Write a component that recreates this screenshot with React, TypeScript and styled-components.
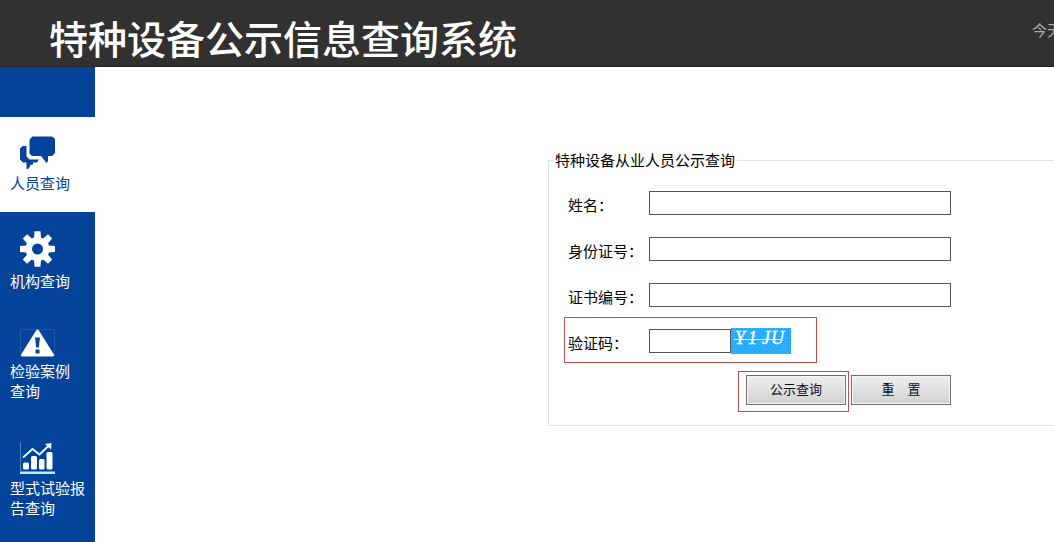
import React from "react";
import styled, { createGlobalStyle } from "styled-components";

const BLUE = "#03439a";
const RED = "#c0504f";

const GlobalStyle = createGlobalStyle`
  * { box-sizing: border-box; }
  html, body, #root { min-height: 100vh; }
  body {
    margin: 0;
    background: #fff;
    color: #000;
    font: 15px/20px "Noto Sans CJK SC", "Liberation Sans", sans-serif;
    overflow-x: hidden;
  }
`;

const Page = styled.div`
  display: flex;
  flex-direction: column;
  min-height: 100vh;
  overflow: hidden;
`;

const Header = styled.header`
  display: flex;
  justify-content: space-between;
  height: 67px;
  padding-left: 49px;
  background: #313131;
  border-bottom: 1px solid #272727;
  overflow: hidden;
`;

const Title = styled.h1`
  margin: 0;
  padding-top: 10px;
  font-size: 39px;
  font-weight: 500;
  line-height: 54px;
  white-space: nowrap;
  color: #fff;
`;

const Today = styled.div`
  width: 22px;
  padding-top: 20px;
  white-space: nowrap;
  color: #aaa;
`;

const Body = styled.div`
  display: flex;
  flex: 1;
`;

const Sidebar = styled.nav`
  flex: 0 0 95px;
  padding-top: 50px;
  background: ${BLUE};
`;

const NavItem = styled.a<{ $active?: boolean }>`
  display: flex;
  flex-direction: column;
  gap: 4px;
  padding: 19px 10px;
  text-decoration: none;
  background: ${(p) => (p.$active ? "#fff" : BLUE)};
  color: ${(p) => (p.$active ? BLUE : "#fff")};

  svg {
    display: block;
    margin-left: 10px;
  }
`;

const NavText = styled.span`
  white-space: pre-line;
`;

const Main = styled.main`
  flex: 1;
  min-width: 0;
  padding: 82px 0 0 453px;
`;

const Panel = styled.fieldset`
  min-width: 560px;
  margin: 0;
  padding: 20px 4px;
  border: 1px solid #e2e2e2;
`;

const Legend = styled.legend`
  padding: 0 2px;
  line-height: 22px;
`;

const Form = styled.form`
  display: flex;
  flex-direction: column;
  gap: 16px;
  width: 398px;
  padding-left: 15px;
`;

const Row = styled.div`
  position: relative;
  display: flex;
  align-items: flex-start;
  height: 30px;
`;

const Label = styled.label`
  flex: 0 0 81px;
  line-height: 28px;
`;

const Field = styled.div`
  display: flex;
  flex: 1;
  align-items: center;
  height: 24px;
`;

const Input = styled.input<{ $short?: boolean }>`
  width: ${(p) => (p.$short ? "82px" : "100%")};
  height: 24px;
  padding: 0 4px;
  border: 1px solid #555;
  border-radius: 0;
  background: #fff;
  font: inherit;
  outline: none;
`;

const Actions = styled.div`
  display: flex;
  justify-content: flex-end;
  gap: 5px;
`;

const ButtonSlot = styled.div`
  position: relative;
`;

const Button = styled.button`
  display: block;
  width: 100px;
  height: 30px;
  padding: 0 0 2px;
  border: 1px solid #707070;
  border-radius: 0;
  background: linear-gradient(#eeeeee, #d2d2d2);
  box-shadow: inset 0 0 0 1px #f6f6f6;
  font: 13px/20px "Noto Sans CJK SC", sans-serif;
  color: #111;
`;

const RowMark = styled.span`
  position: absolute;
  inset: -12px 134px -4px -4px;
  border: 1px solid ${RED};
  pointer-events: none;
`;

const ButtonMark = styled.span`
  position: absolute;
  inset: -4px -3px -7px -8px;
  border: 1px solid ${RED};
  pointer-events: none;
`;

const ChatIcon = () => (
  <svg width="35" height="33" viewBox="0 0 35 33" fill={BLUE} aria-hidden="true">
    <path d="M12.500 0.500H32L35 3V17L32 20H28V25L26.500 27L21 20H12L9.500 17.500V3.500Z" />
    <path d="M2.500 10H6.500V20.500L9.500 23.500H19L17 26.500H13V28.500L10 29V30.500L8 33H6.500V26.500H3L0 23.500V12.500Z" />
  </svg>
);

const GearIcon = () => (
  <svg width="35" height="36" viewBox="-17.500 -18 35 36" fill="#fff" aria-hidden="true">
    {[0, 45, 90, 135].map((a) => (
      <path key={a} d="M-3 -17.800H3L3.500 -10V10L3 17.800H-3L-3.500 10V-10Z" transform={`rotate(${a})`} />
    ))}
    <circle r="12" />
    <circle r="5.500" fill={BLUE} />
  </svg>
);

const WarningIcon = () => (
  <svg width="35" height="28" viewBox="0 0 35 28" fill="#fff" aria-hidden="true">
    <path d="M0.500 27.500V0.500H34.500V27.500" fill="none" stroke="#1d59a8" />
    <path d="M17.500 2L32.500 26H2.500Z" stroke="#fff" strokeWidth="3" strokeLinejoin="round" />
    <path d="M15 8.500H20L18.800 18.500H16.200Z" fill={BLUE} />
    <rect x="15.500" y="20.500" width="4" height="4" fill={BLUE} />
  </svg>
);

const ChartIcon = () => (
  <svg width="35" height="35" viewBox="0 0 35 35" fill="#fff" aria-hidden="true">
    <path d="M0.500 3V32" stroke="#4a86c4" />
    <rect x="3" y="23.500" width="6" height="7" rx="1.500" />
    <rect x="11" y="17" width="6" height="13.500" rx="1.500" />
    <rect x="19" y="20" width="5.500" height="10.500" rx="1.500" />
    <rect x="26.500" y="13" width="6" height="17.500" rx="1.500" />
    <path d="M3 18.500L12.500 10L19.500 15.500L29.500 6" fill="none" stroke="#e8fbff" strokeWidth="1.800" />
    <path d="M25 5L31.500 4L31 10.500Z" />
    <rect y="32.500" width="35" height="2.500" fill="#b5f0f8" />
  </svg>
);

const Captcha = () => (
  <svg width="60" height="26" viewBox="0 0 60 26" role="img" aria-label="验证码图片">
    <defs>
      <pattern id="grain" width="4" height="4" patternUnits="userSpaceOnUse">
        <rect width="4" height="4" fill="#27a8f8" />
        <rect width="1" height="1" fill="#55bdfb" />
        <rect x="2" y="2" width="1" height="1" fill="#55bdfb" />
      </pattern>
    </defs>
    <rect width="60" height="26" fill="url(#grain)" />
    <text
      x="4 17 31 40"
      y="16"
      fill="#fff"
      stroke="#fff"
      strokeWidth="0.400"
      fontFamily="Liberation Serif, serif"
      fontStyle="italic"
      fontSize="18"
    >
      Y1JU
    </text>
    <path d="M3 11.500H50" stroke="#fff" />
  </svg>
);

const navItems = [
  { text: "人员查询", icon: <ChatIcon />, active: true },
  { text: "机构查询", icon: <GearIcon /> },
  { text: "检验案例\n查询", icon: <WarningIcon /> },
  { text: "型式试验报\n告查询", icon: <ChartIcon /> },
];

const fields = [
  { id: "name", label: "姓名：" },
  { id: "idNumber", label: "身份证号：" },
  { id: "certNumber", label: "证书编号：" },
];

export default function App() {
  return (
    <>
      <GlobalStyle />
      <Page>
        <Header>
          <Title>特种设备公示信息查询系统</Title>
          <Today>今天</Today>
        </Header>
        <Body>
          <Sidebar>
            {navItems.map((item) => (
              <NavItem key={item.text} href="#" $active={item.active}>
                {item.icon}
                <NavText>{item.text}</NavText>
              </NavItem>
            ))}
          </Sidebar>
          <Main>
            <Panel>
              <Legend>特种设备从业人员公示查询</Legend>
              <Form onSubmit={(e) => e.preventDefault()}>
                {fields.map((f) => (
                  <Row key={f.id}>
                    <Label htmlFor={f.id}>{f.label}</Label>
                    <Field>
                      <Input id={f.id} type="text" />
                    </Field>
                  </Row>
                ))}
                <Row>
                  <Label htmlFor="captcha">验证码：</Label>
                  <Field>
                    <Input id="captcha" type="text" $short />
                    <Captcha />
                  </Field>
                  <RowMark />
                </Row>
                <Actions>
                  <ButtonSlot>
                    <Button type="submit">公示查询</Button>
                    <ButtonMark />
                  </ButtonSlot>
                  <Button type="reset">重　置</Button>
                </Actions>
              </Form>
            </Panel>
          </Main>
        </Body>
      </Page>
    </>
  );
}
